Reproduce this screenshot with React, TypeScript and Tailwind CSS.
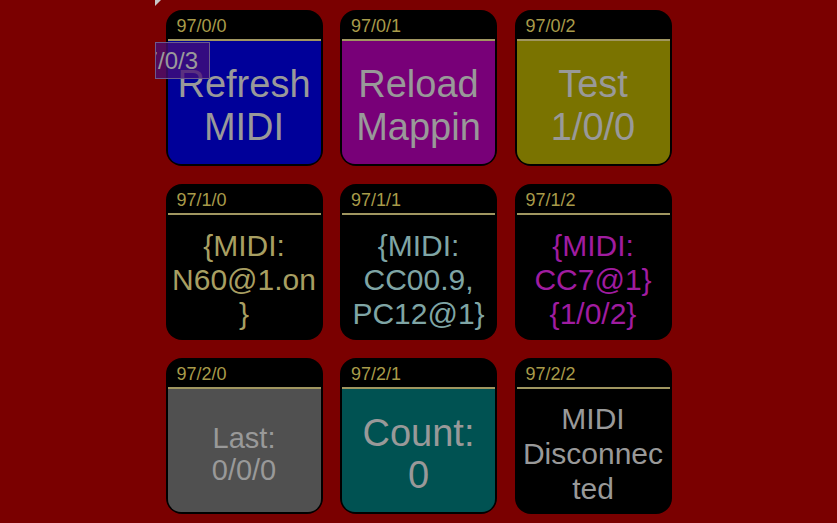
import React from 'react';

type Cell = {
  id: string;
  lines: string[];
  body: string;
  text: string;
  size: string;
};

const cells: Cell[] = [
  { id: '97/0/0', lines: ['Refresh', 'MIDI'], body: 'bg-[#000099]', text: 'text-[#999999]', size: 'text-[38px] leading-[43px]' },
  { id: '97/0/1', lines: ['Reload', 'Mappin'], body: 'bg-[#780078]', text: 'text-[#999999]', size: 'text-[38px] leading-[43px]' },
  { id: '97/0/2', lines: ['Test', '1/0/0'], body: 'bg-[#7a7300]', text: 'text-[#999999]', size: 'text-[38px] leading-[43px]' },
  { id: '97/1/0', lines: ['{MIDI:', 'N60@1.on', '}'], body: 'bg-black', text: 'text-[#a89f62]', size: 'text-[30px] leading-[34px]' },
  { id: '97/1/1', lines: ['{MIDI:', 'CC00.9,', 'PC12@1}'], body: 'bg-black', text: 'text-[#7fa5a5]', size: 'text-[30px] leading-[34px]' },
  { id: '97/1/2', lines: ['{MIDI:', 'CC7@1}', '{1/0/2}'], body: 'bg-black', text: 'text-[#a01ca0]', size: 'text-[30px] leading-[34px]' },
  { id: '97/2/0', lines: ['Last:', '0/0/0'], body: 'bg-[#505050]', text: 'text-[#999999]', size: 'text-[29px] leading-[32px]' },
  { id: '97/2/1', lines: ['Count:', '0'], body: 'bg-[#005252]', text: 'text-[#999999]', size: 'text-[38px] leading-[42px]' },
  { id: '97/2/2', lines: ['MIDI', 'Disconnec', 'ted'], body: 'bg-black', text: 'text-[#999999]', size: 'text-[30px] leading-[35px]' },
];

function Tile({ cell }: { cell: Cell }) {
  return (
    <div className="w-[157px] h-[156px] rounded-[16px] bg-black p-[2px] flex flex-col">
      {/* header */}
      <div className="h-[27px] pl-[9px] flex items-center text-[18px] leading-none text-[#a89b4a]">
        {cell.id}
      </div>
      <div className="h-[2px] bg-[#a09660]" />
      {/* body */}
      <div className={`flex-1 pt-[6px] rounded-b-[13px] flex flex-col items-center justify-center text-center ${cell.body} ${cell.text} ${cell.size}`}>
        {cell.lines.map((l, i) => (
          <div key={i} className="whitespace-nowrap">{l}</div>
        ))}
      </div>
    </div>
  );
}

export default function App() {
  return (
    <div
      className="relative min-h-screen bg-[#7a0000] flex justify-center pt-[10px]"
      style={{ fontFamily: '"Liberation Sans", Arial, sans-serif' }}
    >
      <div className="grid grid-cols-[repeat(3,157px)] gap-x-[17.5px] gap-y-[18px] h-fit">
        {cells.map((c) => (
          <Tile key={c.id} cell={c} />
        ))}
      </div>

      {/* corner marker */}
      <svg className="absolute left-[155px] top-0" width="6" height="6" viewBox="0 0 6 6">
        <polygon points="0,0 6,0 0,6" fill="#c8c8c8" />
      </svg>

      {/* drag ghost */}
      <div className="absolute left-[155px] top-[42px] w-[55px] h-[37px] overflow-hidden border border-[#6b5a8c] bg-[rgba(70,15,120,0.75)] flex items-center justify-end pr-[11px]">
        <span className="whitespace-nowrap text-[24px] leading-none text-[#9a9a9a]">97/0/3</span>
      </div>
    </div>
  );
}
